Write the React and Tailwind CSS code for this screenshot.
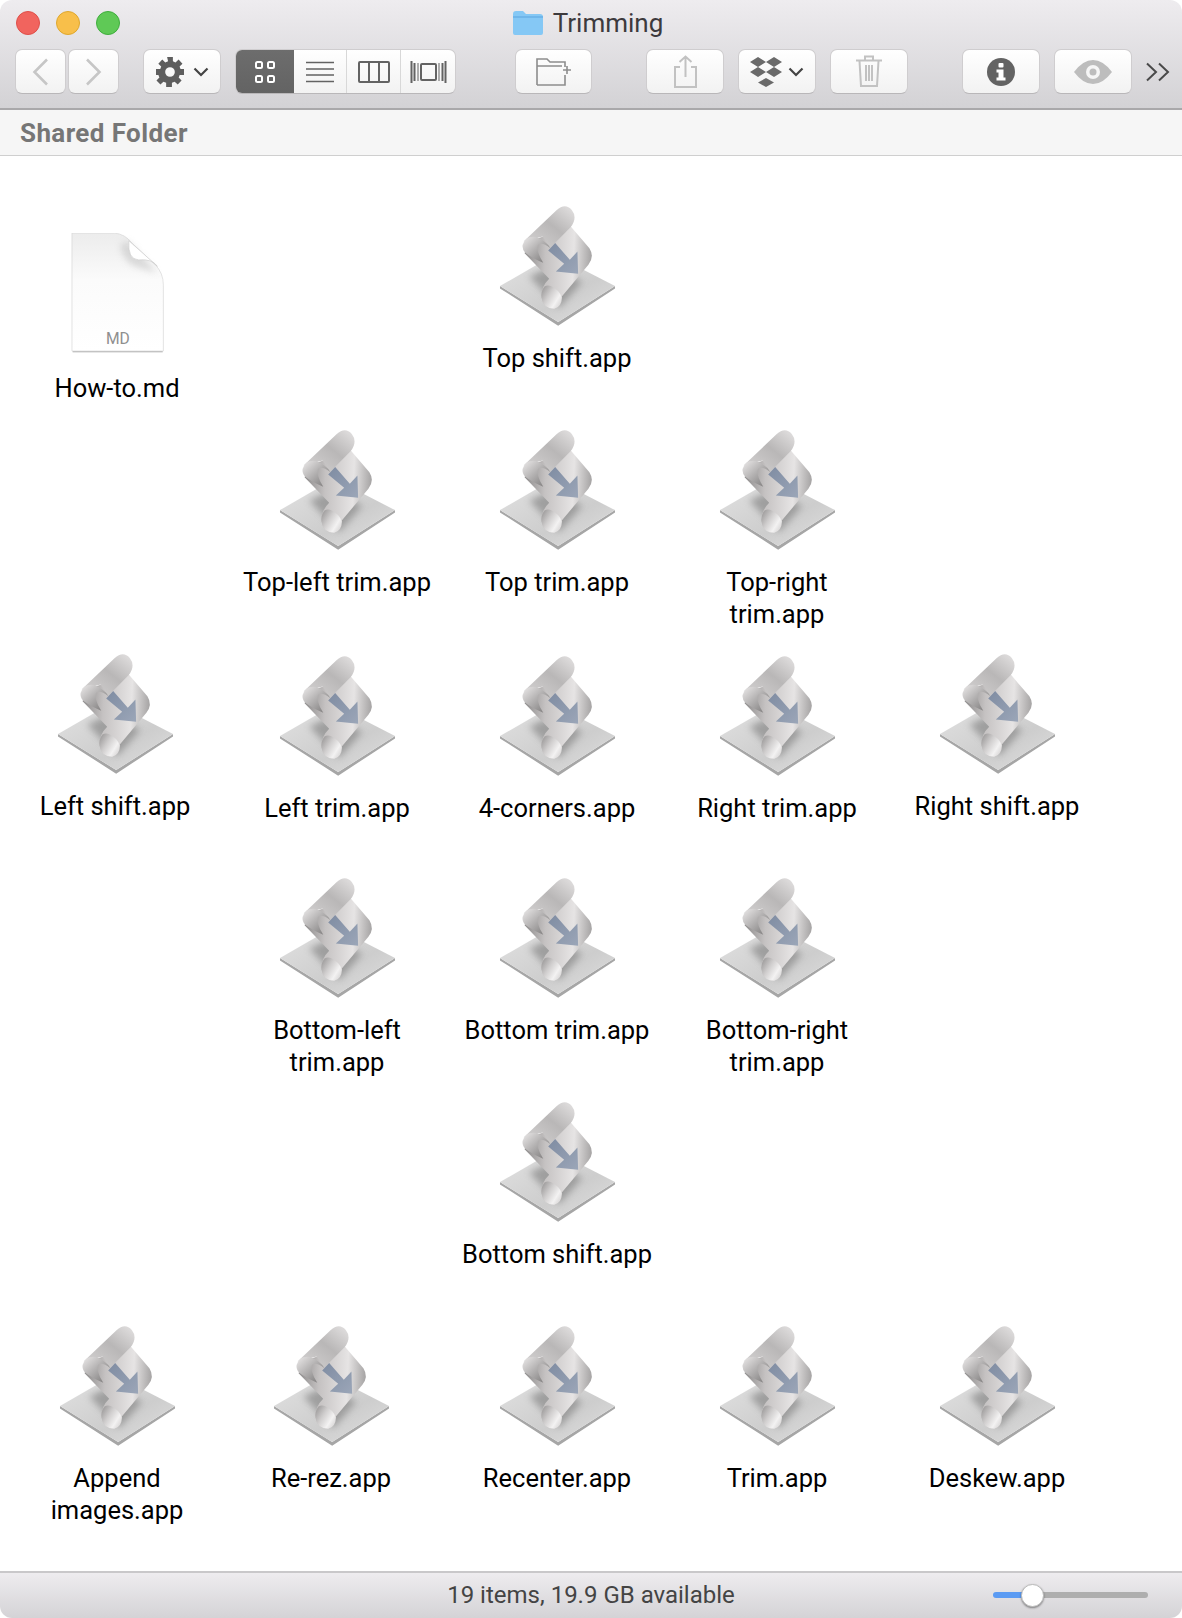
const items = [
  { name: 'Top shift.app', x: 557, y: 205 },
  { name: 'Top-left trim.app', x: 337, y: 429 },
  { name: 'Top trim.app', x: 557, y: 429 },
  { name: 'Top-right\ntrim.app', x: 777, y: 429 },
  { name: 'Left shift.app', x: 115, y: 653 },
  { name: 'Left trim.app', x: 337, y: 655 },
  { name: '4-corners.app', x: 557, y: 655 },
  { name: 'Right trim.app', x: 777, y: 655 },
  { name: 'Right shift.app', x: 997, y: 653 },
  { name: 'Bottom-left\ntrim.app', x: 337, y: 877 },
  { name: 'Bottom trim.app', x: 557, y: 877 },
  { name: 'Bottom-right\ntrim.app', x: 777, y: 877 },
  { name: 'Bottom shift.app', x: 557, y: 1101 },
  { name: 'Append\nimages.app', x: 117, y: 1325 },
  { name: 'Re-rez.app', x: 331, y: 1325 },
  { name: 'Recenter.app', x: 557, y: 1325 },
  { name: 'Trim.app', x: 777, y: 1325 },
  { name: 'Deskew.app', x: 997, y: 1325 },
]

function ScrollIcon() {
  return (
    <svg viewBox="5 40 460 370" className="h-[123px] w-[153px] shrink-0">
      <defs>
        <linearGradient id="plate" x1="0" y1="0" x2="1" y2="1">
          <stop offset="0" stopColor="#e2e2e2" />
          <stop offset="0.6" stopColor="#cdcdcd" />
          <stop offset="1" stopColor="#e0e0e0" />
        </linearGradient>
        <linearGradient id="strip" x1="0" y1="1" x2="1" y2="0">
          <stop offset="0" stopColor="#d6d4d4" />
          <stop offset="0.55" stopColor="#b9b7b7" />
          <stop offset="1" stopColor="#e4e2e2" />
        </linearGradient>
        <linearGradient id="sheet" x1="0" y1="0.5" x2="1" y2="0.55">
          <stop offset="0" stopColor="#8f8d8d" />
          <stop offset="0.3" stopColor="#c5c2c2" />
          <stop offset="0.72" stopColor="#e6e4e4" />
          <stop offset="1" stopColor="#a3a1a1" />
        </linearGradient>
        <linearGradient id="curl" x1="0" y1="0" x2="1" y2="1">
          <stop offset="0" stopColor="#eceaea" />
          <stop offset="0.45" stopColor="#b5b3b3" />
          <stop offset="1" stopColor="#747272" />
        </linearGradient>
        <linearGradient id="roll" x1="0" y1="0" x2="1" y2="0.7">
          <stop offset="0" stopColor="#918f8f" />
          <stop offset="0.45" stopColor="#cfcdcd" />
          <stop offset="0.8" stopColor="#f3f2f2" />
          <stop offset="1" stopColor="#dcdada" />
        </linearGradient>
        <linearGradient id="arrow" x1="0" y1="0" x2="1" y2="1">
          <stop offset="0" stopColor="#7f8ca2" />
          <stop offset="1" stopColor="#9ba6b8" />
        </linearGradient>
        <filter id="soft" x="-30%" y="-30%" width="160%" height="160%">
          <feGaussianBlur stdDeviation="12" />
        </filter>
      </defs>
      <path d="M62,284 L237,392 L408,284 L408,291 L237,403 L62,291 Z" fill="#a6a6a6" />
      <path d="M62,284 L225,190 L408,284 L237,392 Z" fill="url(#plate)" />
      <path d="M150,255 L215,225 L310,270 L240,350 Z" fill="#7c7c7c" opacity="0.6" filter="url(#soft)" />
      <path
        d="M136,185 L210,262 Q186,285 187,315 Q192,352 225,352 Q246,345 248,315 L328,220 Q347,195 331,170 L275,105 L150,150 Z"
        fill="url(#sheet)"
      />
      <path d="M133,150 L232,56 Q258,32 278,55 Q296,78 275,106 L214,168 L190,135 Z" fill="url(#strip)" />
      <path d="M130,160 Q138,132 170,136 Q200,146 214,170 Q188,150 176,160 Q170,178 192,214 Q155,198 138,184 Q128,172 130,160 Z" fill="url(#curl)" />
      <path d="M228,154 L272,205 L295,180 L297,247 L230,240 L255,217 L207,177 Z" fill="url(#arrow)" />
      <path d="M196,285 Q184,300 187,320 Q192,352 225,352 Q248,346 248,318 Q240,296 215,284 Q205,280 196,285 Z" fill="url(#roll)" />
    </svg>
  )
}

function DocIcon() {
  return (
    <svg viewBox="2 55 460 370" className="h-[123px] w-[153px] shrink-0">
      <defs>
        <linearGradient id="paper" x1="0" y1="0" x2="0" y2="1">
          <stop offset="0" stopColor="#ececec" />
          <stop offset="0.4" stopColor="#fbfbfb" />
          <stop offset="1" stopColor="#ffffff" />
        </linearGradient>
        <filter id="foldshade" x="-30%" y="-30%" width="160%" height="160%">
          <feGaussianBlur stdDeviation="9" />
        </filter>
      </defs>
      <rect x="97" y="404" width="271" height="10" fill="#8c8c8c" opacity="0.6" />
      <path
        d="M95,55 H222 Q255,58 275,85 L345,150 Q370,175 370,212 V410 H95 Z"
        fill="url(#paper)"
        stroke="#d6d6d6"
        strokeWidth="2"
      />
      <path d="M240,90 Q250,150 300,160 L350,175 L265,80 Z" fill="#bdbdbd" opacity="0.5" filter="url(#foldshade)" />
      <path d="M266,78 Q262,135 296,136 Q335,132 352,155 Z" fill="#ffffff" stroke="#cccccc" strokeWidth="2" />
      <text x="233" y="390" textAnchor="middle" fontSize="47" fill="#8f8f8f" fontFamily="Roboto, sans-serif">
        MD
      </text>
    </svg>
  )
}

function ToolButton({ className = '', children }) {
  return (
    <div
      className={`flex h-[45px] items-center justify-center rounded-[7px] border border-[#cfcdcf] border-b-[#b9b7b9] bg-gradient-to-b from-white to-[#f2f2f2] ${className}`}
    >
      {children}
    </div>
  )
}

function Chevron() {
  return (
    <svg width="16" height="10" viewBox="0 0 16 10" fill="none" stroke="#444" strokeWidth="2.2">
      <path d="M1.5 1.500 L8 8 L14.500 1.500" />
    </svg>
  )
}

function Gear() {
  return (
    <svg width="28" height="30" viewBox="0 0 29 31" fill="#5e5e5e">
      <path
        fillRule="evenodd"
        d="M11.5 0h6v4.4l2.7 1.2 3.2-3 4 4.3-3 3 1 2.6H29v6h-4.5l-1 2.7 3 3-4 4.3-3.2-3-2.8 1.1V31h-6v-4.4l-2.8-1.1-3.1 3-4.1-4.3 3-3-1-2.7H0v-6h4.4l1-2.6-3-3 4.1-4.3 3.1 3 2.9-1.2z M14.5 10.5a5 5 0 1 0 0 10a5 5 0 0 0 0-10z"
      />
    </svg>
  )
}

function Toolbar() {
  return (
    <div className="flex h-[45px] items-center pl-[15px]">
      <ToolButton className="w-[51px]">
        <svg width="17" height="28" viewBox="0 0 17 28" fill="none" stroke="#c6c6c6" strokeWidth="2.6">
          <path d="M15 1.5 L2.5 14 L15 26.5" />
        </svg>
      </ToolButton>
      <ToolButton className="ml-[2px] w-[51px]">
        <svg width="17" height="28" viewBox="0 0 17 28" fill="none" stroke="#c6c6c6" strokeWidth="2.6">
          <path d="M2 1.5 L14.5 14 L2 26.5" />
        </svg>
      </ToolButton>
      <ToolButton className="ml-[24px] w-[78px] gap-[9px]">
        <Gear />
        <Chevron />
      </ToolButton>

      <div className="ml-[14px] flex h-[45px] w-[221px] overflow-hidden rounded-[7px] border border-[#cfcdcf] border-b-[#b9b7b9] bg-gradient-to-b from-white to-[#f2f2f2]">
        <div className="-my-px -ml-px flex w-[59px] items-center justify-center bg-gradient-to-b from-[#6d6d6d] to-[#636363]">
          <svg width="20" height="22" viewBox="0 0 20 22" fill="none" stroke="#fff" strokeWidth="2">
            <rect x="1" y="1" width="6" height="6" rx="1.5" />
            <rect x="13" y="1" width="6" height="6" rx="1.5" />
            <rect x="1" y="15" width="6" height="6" rx="1.5" />
            <rect x="13" y="15" width="6" height="6" rx="1.5" />
          </svg>
        </div>
        <div className="flex w-[53px] items-center justify-center border-r border-[#d8d8d8]">
          <svg width="28" height="22" viewBox="0 0 28 22" fill="none" stroke="#636363" strokeWidth="1.6">
            <path d="M0 1.5H28M0 8H28M0 14H28M0 20.5H28" />
          </svg>
        </div>
        <div className="flex w-[54px] items-center justify-center border-r border-[#d8d8d8]">
          <svg width="32" height="22" viewBox="0 0 32 22" fill="none" stroke="#636363" strokeWidth="2">
            <rect x="1" y="1" width="30" height="20" rx="1" />
            <path d="M11 1V21M21 1V21" />
          </svg>
        </div>
        <div className="flex flex-1 items-center justify-center">
          <svg width="37" height="24" viewBox="0 0 37 24" fill="none" stroke="#636363" strokeWidth="2">
            <path d="M1.5 1V23M4.5 3V21M35.5 1V23M32.5 3V21" />
            <rect x="11" y="4" width="15" height="16" rx="1" />
            <path d="M8 3V21M29 3V21" strokeWidth="1" />
          </svg>
        </div>
      </div>

      <ToolButton className="ml-[59px] w-[77px]">
        <svg width="36" height="28" viewBox="0 0 36 28" fill="none" stroke="#8d8d8d" strokeWidth="1.6">
          <path d="M1 27V1H11L14 4H29V9M1 8H26M29 17V27H1M31 8V16M27 12H35" />
        </svg>
      </ToolButton>
      <ToolButton className="ml-[54px] w-[78px]">
        <svg width="23" height="33" viewBox="0 0 23 33" fill="none" stroke="#c2c2c2" strokeWidth="2">
          <path d="M6 12H1V32H22V12H17M11.5 22V2M5.5 7L11.5 1.5L17.5 7" />
        </svg>
      </ToolButton>
      <ToolButton className="ml-[14px] w-[78px] gap-[6px]">
        <svg width="32" height="30" viewBox="0 0 32 30" fill="#6a6a6a">
          <path d="M8 0L16 5L8 10L0 5Z M24 0L32 5L24 10L16 5Z M8 10L16 15L8 20L0 15Z M24 10L32 15L24 20L16 15Z M16 21L24 25.500L16 30L8 25.500Z" />
        </svg>
        <Chevron />
      </ToolButton>
      <ToolButton className="ml-[14px] w-[78px]">
        <svg width="26" height="33" viewBox="0 0 26 33" fill="none" stroke="#c2c2c2" strokeWidth="2">
          <path d="M0 5.500H26M9 5V1.500H17V5M3.500 6L5 31H21L22.500 6M10 10V26M13 10V26M16 10V26" />
        </svg>
      </ToolButton>
      <ToolButton className="ml-[54px] w-[78px]">
        <svg width="28" height="28" viewBox="0 0 28 28">
          <circle cx="14" cy="14" r="14" fill="#636363" />
          <rect x="11.500" y="5" width="5" height="4.500" rx="1" fill="#fff" />
          <path d="M9.500 11.500H16.500V19.500H18.500V22.500H9.500V19.500H11.500V14.500H9.500Z" fill="#fff" />
        </svg>
      </ToolButton>
      <ToolButton className="ml-[14px] w-[78px]">
        <svg width="38" height="24" viewBox="0 0 38 24">
          <path d="M0 12Q9 0 19 0T38 12Q29 24 19 24T0 12Z" fill="#bdbdbd" />
          <circle cx="19" cy="12" r="7" fill="#f6f6f6" />
          <circle cx="19" cy="12" r="3.500" fill="#bdbdbd" />
        </svg>
      </ToolButton>
      <svg className="ml-[14px]" width="24" height="20" viewBox="0 0 24 20" fill="none" stroke="#4a4a4a" strokeWidth="2">
        <path d="M1 1.500L10 10L1 18.500M13 1.500L22 10L13 18.500" />
      </svg>
    </div>
  )
}

export default function App() {
  return (
    <div className="flex h-[1618px] w-[1182px] flex-col overflow-hidden rounded-[12px] bg-white font-['Roboto',sans-serif]">
      <header className="h-[110px] shrink-0 border-b-2 border-[#a9a8aa] bg-gradient-to-b from-[#eeecef] to-[#d3d2d5]">
        <div className="grid h-[49px] grid-cols-[1fr_auto_1fr] items-center pb-[3px]">
          <div className="flex gap-[16px] pl-[16px]">
            <span className="h-[24px] w-[24px] rounded-full border border-[#de4f49] bg-[#f1645e]" />
            <span className="h-[24px] w-[24px] rounded-full border border-[#dea72e] bg-[#f8bf4a]" />
            <span className="h-[24px] w-[24px] rounded-full border border-[#3fad3d] bg-[#5fc956]" />
          </div>
          <div className="mr-[6px] flex items-center gap-[10px]">
            <svg width="30" height="24" viewBox="0 0 30 24">
              <path d="M0 3Q0 0 3 0H10L13 3H27Q30 3 30 6V22Q30 24 28 24H2Q0 24 0 22Z" fill="#85c8f5" />
              <path d="M0 5H30V7H0Z" fill="#6fb6ea" />
            </svg>
            <span className="text-[26px] leading-none text-[#3d3a3d]">Trimming</span>
          </div>
          <div />
        </div>
        <Toolbar />
      </header>

      <div className="flex h-[46px] shrink-0 items-center border-b border-[#cfcfcf] bg-[#f6f6f6] pl-[20px] pt-[2px] text-[26px] font-bold tracking-[0.4px] text-[#767676]">
        Shared Folder
      </div>

      {/* icon view: the free arrangement of the icons is the content */}
      <main className="relative flex-1 bg-white">
        <div className="absolute left-[7px] top-[77px] flex w-[220px] flex-col items-center">
          <DocIcon />
          <p className="mt-[16px] text-center text-[25.5px] leading-[32px] text-black">How-to.md</p>
        </div>
        {items.map((item) => (
          <div
            key={item.name}
            className="absolute flex w-[220px] flex-col items-center"
            style={{ left: item.x - 110, top: item.y - 156 }}
          >
            <ScrollIcon />
            <p className="mt-[14px] whitespace-pre-line text-center text-[25.5px] leading-[32px] text-black">
              {item.name}
            </p>
          </div>
        ))}
      </main>

      <footer className="relative flex h-[47px] shrink-0 items-center justify-center border-t-2 border-[#c9c8ca] bg-gradient-to-b from-[#eeecef] to-[#d4d3d6] pb-[2px] text-[24px] text-[#444]">
        19 items, 19.9 GB available
        <div className="absolute left-[993px] top-[19px] flex h-[6px] w-[155px] items-center">
          <div className="h-[6px] w-[30px] rounded-l-full bg-[#5b9bf3]" />
          <div className="h-[6px] flex-1 rounded-r-full bg-[#aeaeae]" />
          <div className="absolute left-[28px] h-[23px] w-[23px] rounded-full border border-[#bbb] bg-white shadow-[0_1px_2px_rgba(0,0,0,0.4)]" />
        </div>
      </footer>
    </div>
  )
}
